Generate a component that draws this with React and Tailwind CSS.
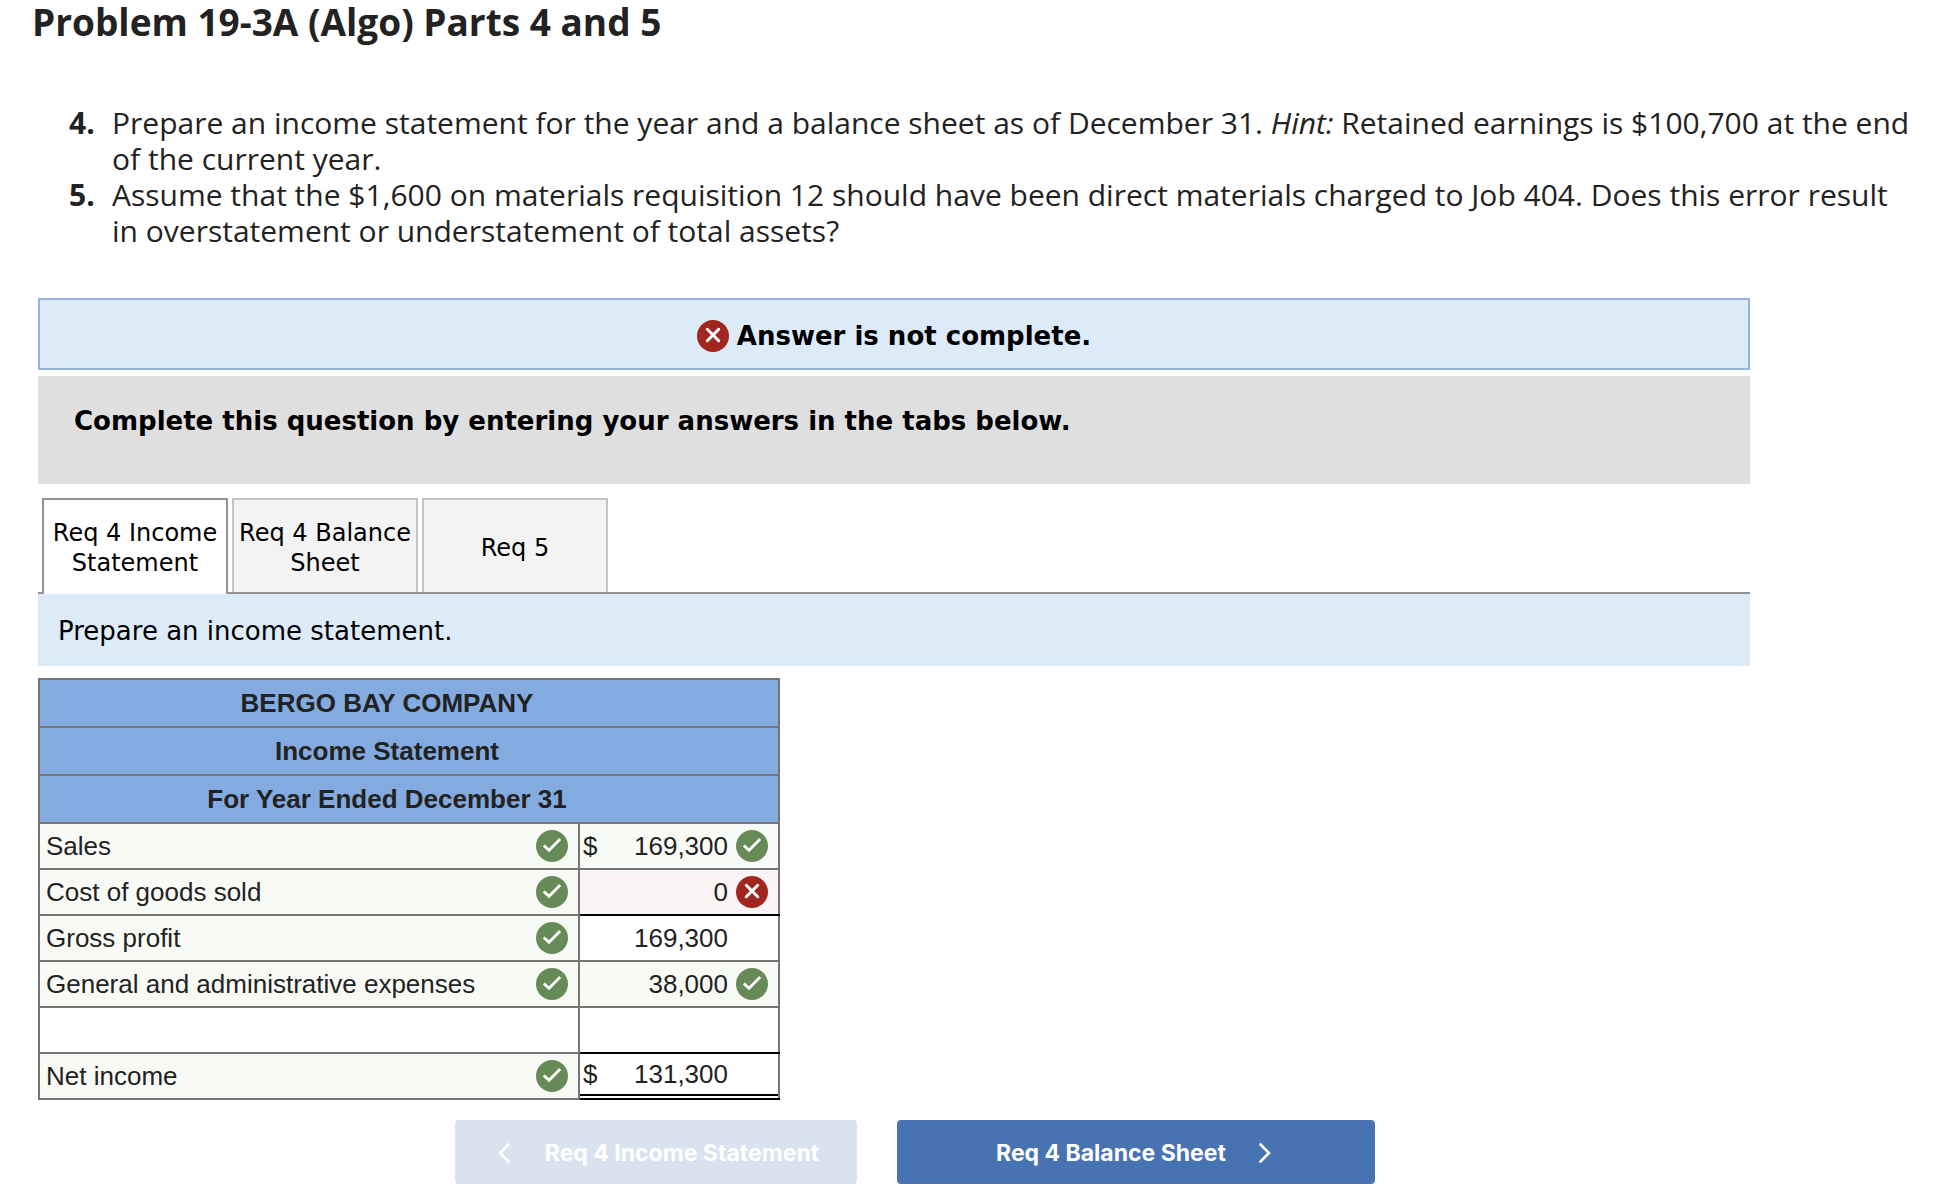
import React from "react";

const rows = [
  { label: "Sales", graded: true, currency: true, amount: "169,300", mark: "right" },
  { label: "Cost of goods sold", graded: true, amount: "0", mark: "wrong", rule: "bottom" },
  { label: "Gross profit", graded: true, amount: "169,300", rule: "top" },
  { label: "General and administrative expenses", graded: true, amount: "38,000", mark: "right" },
  { label: "", amount: "", rule: "bottom" },
  { label: "Net income", graded: true, currency: true, amount: "131,300", rule: "total" },
];

const titles = ["BERGO BAY COMPANY", "Income Statement", "For Year Ended December 31"];

const rules = {
  top: "border-t-black",
  bottom: "border-b-black",
  total: "border-t-black border-b-black",
};

function RightIcon() {
  return (
    <svg viewBox="0 0 32 32" className="size-8 shrink-0" role="img" aria-label="Correct">
      <circle cx="16" cy="16" r="16" fill="#668b58" />
      <path d="M7.8 15.5 13 20.3 24.2 9" fill="none" stroke="#fff" strokeWidth="2.8" />
    </svg>
  );
}

function WrongIcon() {
  return (
    <svg viewBox="0 0 32 32" className="size-8 shrink-0" role="img" aria-label="Incorrect">
      <circle cx="16" cy="16" r="16" fill="#a1261f" />
      <path
        d="M10.3 9.3 21.7 20.7M21.7 9.3 10.3 20.7"
        fill="none"
        stroke="#fff"
        strokeWidth="3"
        strokeLinecap="round"
      />
    </svg>
  );
}

function Chevron({ d }) {
  return (
    <svg viewBox="0 0 14 20" className="h-5 w-3.5 shrink-0" aria-hidden="true">
      <path d={d} fill="none" stroke="#fff" strokeWidth="2.6" strokeLinecap="round" />
    </svg>
  );
}

function Requirement({ number, children }) {
  return (
    <li className="flex">
      <span className="w-[43px] shrink-0 font-bold">{number}.</span>
      <p>{children}</p>
    </li>
  );
}

function Tab({ active, children }) {
  return (
    <button
      type="button"
      role="tab"
      aria-selected={Boolean(active)}
      className={
        active
          ? "-mb-0.5 h-24 w-[186px] border-2 border-b-0 border-[#929292] bg-white pt-0.5"
          : "h-[94px] w-[186px] border-2 border-b-0 border-[#c4c4c4] bg-[#f3f3f3] pt-1"
      }
    >
      {children}
    </button>
  );
}

function AmountCell({ row }) {
  const tone =
    row.mark === "right" ? "bg-[#f8faf6]" : row.mark === "wrong" ? "bg-[#fbf4f4]" : "bg-white";
  const rule = row.rule ? rules[row.rule] : "";
  return (
    <td className={`h-[46px] border-2 border-[#757575] p-0 ${tone} ${rule}`}>
      <div
        className={
          row.rule === "total"
            ? "mb-0.5 flex h-[42px] items-center border-b-2 border-black pr-2.5 pl-[3px]"
            : "flex h-11 items-center pr-2.5 pl-[3px]"
        }
      >
        <span>{row.currency ? "$" : ""}</span>
        <span className="mr-2 ml-auto">{row.amount}</span>
        <span className="size-8">
          {row.mark === "right" && <RightIcon />}
          {row.mark === "wrong" && <WrongIcon />}
        </span>
      </div>
    </td>
  );
}

export default function App() {
  return (
    <main className="bg-white text-[#222222]">
      <header className="font-['Open_Sans',sans-serif]">
        <h1 className="pl-8 text-[37px] leading-[44px] font-bold">
          Problem 19-3A (Algo) Parts 4 and 5
        </h1>
        <ol className="mt-[61px] pr-6 pl-[69px] text-[30px] leading-9">
          <Requirement number={4}>
            Prepare an income statement for the year and a balance sheet as of December 31.{" "}
            <em>Hint:</em> Retained earnings is $100,700 at the end of the current year.
          </Requirement>
          <Requirement number={5}>
            Assume that the $1,600 on materials requisition 12 should have been direct materials
            charged to Job 404. Does this error result in overstatement or understatement of total
            assets?
          </Requirement>
        </ol>
      </header>

      <section className="mt-[49px] ml-[38px] max-w-[1712px] font-['DejaVu_Sans',Verdana,sans-serif] text-[26px] leading-8 text-black">
        <div className="flex h-[72px] items-center justify-center gap-2 border-2 border-[#98b5d8] bg-[#ddebf9] pt-1 font-bold">
          <WrongIcon />
          <p>Answer is not complete.</p>
        </div>

        <div className="mt-1.5 bg-[#dfdfdf] px-9 pt-[29px] pb-[47px] font-bold">
          <p>Complete this question by entering your answers in the tabs below.</p>
        </div>

        <div
          role="tablist"
          className="mt-3.5 flex gap-1 border-b-2 border-[#929292] pl-1 text-[24px] leading-[30px]"
        >
          <Tab active>Req 4 Income Statement</Tab>
          <Tab>
            Req 4 Balance
            <br />
            Sheet
          </Tab>
          <Tab>Req 5</Tab>
        </div>
        <p className="bg-[#ddebf9] px-5 pt-[21px] pb-[19px]">Prepare an income statement.</p>

        <table className="mt-3 w-[742px] table-fixed border-collapse font-['Liberation_Sans',Arial,sans-serif] leading-[30px] text-[#222222]">
          <colgroup>
            <col />
            <col className="w-[200px]" />
          </colgroup>
          <thead>
            {titles.map((title) => (
              <tr key={title}>
                <th
                  colSpan={2}
                  className="h-12 border-2 border-[#757575] bg-[#84abe0] py-0 pr-11 pl-0 text-center font-bold"
                >
                  {title}
                </th>
              </tr>
            ))}
          </thead>
          <tbody>
            {rows.map((row, i) => (
              <tr key={i}>
                <td
                  className={
                    row.graded
                      ? "h-[46px] border-2 border-[#757575] bg-[#f8faf6] p-0"
                      : "h-[46px] border-2 border-[#757575] bg-white p-0"
                  }
                >
                  <div className="flex h-11 items-center justify-between pr-2.5 pl-1.5">
                    <span>{row.label}</span>
                    {row.graded && <RightIcon />}
                  </div>
                </td>
                <AmountCell row={row} />
              </tr>
            ))}
          </tbody>
        </table>

        <nav className="mt-5 flex justify-center gap-10 pl-[42px] font-[Inter,sans-serif] text-[23px] font-bold text-white">
          <button
            type="button"
            disabled
            className="flex h-16 w-[402px] items-center justify-center gap-[34px] rounded bg-[#d9e3ef] pt-0.5 pl-1"
          >
            <Chevron d="M11.5 1.5 3 10l8.5 8.5" />
            Req 4 Income Statement
          </button>
          <button
            type="button"
            className="flex h-16 w-[478px] items-center justify-center gap-8 rounded bg-[#4873b3] pt-0.5 pr-1"
          >
            Req 4 Balance Sheet
            <Chevron d="M2.5 1.5 11 10l-8.5 8.5" />
          </button>
        </nav>
      </section>
    </main>
  );
}
